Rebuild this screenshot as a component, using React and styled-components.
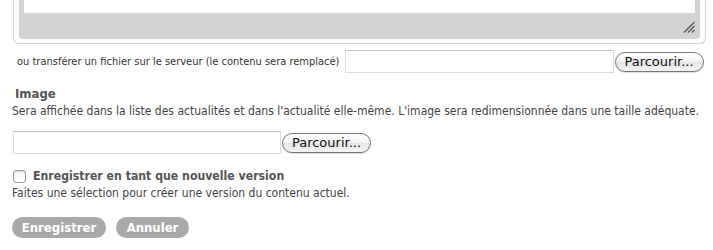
import React from 'react';
import styled, { createGlobalStyle } from 'styled-components';

const Global = createGlobalStyle`
  html, body { margin: 0; padding: 0; background: #fff; }
  body { font-family: "DejaVu Sans Condensed", "DejaVu Sans", sans-serif; color: #333; }
`;

const Page = styled.div`
  width: 713px;
  height: 250px;
  overflow: hidden;
  display: flex;
  flex-direction: column;
`;

const EditorFrame = styled.div`
  margin: 0 7px 0 13px;
  border: 1px solid #d4d4d4;
  border-top: none;
  border-radius: 0 0 6px 6px;
  padding: 0 5px 4px 5px;
`;

const EditorChrome = styled.div`
  background: #d3d3d3;
  border-radius: 0 0 4px 4px;
  padding: 0 5px 0 5px;
`;

const EditorArea = styled.div`
  background: #fff;
  height: 13px;
`;

const StatusBar = styled.div`
  height: 26px;
  display: flex;
  justify-content: flex-end;
  align-items: flex-end;
  padding-bottom: 6px;
  box-sizing: border-box;
`;

const UploadRow = styled.div`
  display: flex;
  align-items: center;
  margin-top: ${(p) => p.$top}px;
  padding-left: ${(p) => p.$indent || 0}px;
`;

const UploadLabel = styled.span`
  font-size: 11px;
  color: #333;
  margin-right: 5px;
`;

const FileInput = styled.div`
  width: ${(p) => p.$w}px;
  height: 23px;
  box-sizing: border-box;
  border: 1px solid #dcdcdc;
  border-top-color: #c4c4c4;
  background: #fff;
`;

const BrowseButton = styled.button`
  margin-left: 1px;
  width: 89px;
  height: 20px;
  padding: 0;
  border: 1px solid #777;
  border-radius: 10px;
  background: linear-gradient(#ffffff, #f2f2f2 50%, #e4e4e4 51%, #f4f4f4);
  font-family: "DejaVu Sans", sans-serif;
  font-size: 13px;
  color: #111;
  line-height: 18px;
  box-shadow: 0 1px 1px rgba(0, 0, 0, 0.15);
`;

const SectionTitle = styled.div`
  margin: 13px 0 0 15px;
  font-size: 13px;
  font-weight: bold;
  color: #555;
  line-height: 16px;
`;

const Help = styled.div`
  margin: ${(p) => p.$top || 0}px 0 0 12px;
  font-size: 12px;
  color: #444;
  line-height: 15px;
`;

const CheckRow = styled.label`
  display: flex;
  align-items: center;
  margin: 14px 0 0 13px;
  font-size: 12.2px;
  font-weight: bold;
  color: #555;
  line-height: 16px;
  gap: 7px;
`;

const CheckBox = styled.span`
  width: 11px;
  height: 11px;
  border: 1px solid #9a9a9a;
  border-radius: 3px;
  background: linear-gradient(#f4f4f4, #fff);
  box-shadow: inset 0 1px 1px rgba(0,0,0,0.12);
`;

const Actions = styled.div`
  display: flex;
  gap: 10px;
  margin: 16px 0 0 12px;
`;

const PillButton = styled.button`
  width: ${(p) => p.$w}px;
  height: 21px;
  padding: 0;
  border: none;
  border-radius: 11px;
  background: #a9a9a9;
  color: #fff;
  font-family: "DejaVu Sans Condensed", "DejaVu Sans", sans-serif;
  font-weight: bold;
  font-size: 13px;
  line-height: 21px;
`;

function Grip() {
  return (
    <svg width="12" height="12" viewBox="0 0 12 12">
      <g stroke="#555" strokeWidth="1.2">
        <line x1="1" y1="11.5" x2="11.5" y2="1" />
        <line x1="5" y1="11.5" x2="11.5" y2="5" />
        <line x1="9" y1="11.5" x2="11.5" y2="9" />
      </g>
    </svg>
  );
}

export default function App() {
  return (
    <Page>
      <Global />
      <EditorFrame>
        <EditorChrome>
          <EditorArea />
          <StatusBar>
            <Grip />
          </StatusBar>
        </EditorChrome>
      </EditorFrame>
      <UploadRow $indent={17} $top={6}>
        <UploadLabel>ou transférer un fichier sur le serveur (le contenu sera remplacé)</UploadLabel>
        <FileInput $w={269} />
        <BrowseButton>Parcourir...</BrowseButton>
      </UploadRow>
      <SectionTitle>Image</SectionTitle>
      <Help $top={2}>
        Sera affichée dans la liste des actualités et dans l'actualité elle-même. L'image sera redimensionnée dans une taille adéquate.
      </Help>
      <UploadRow $indent={13} $top={12}>
        <FileInput $w={268} />
        <BrowseButton>Parcourir...</BrowseButton>
      </UploadRow>
      <CheckRow>
        <CheckBox />
        Enregistrer en tant que nouvelle version
      </CheckRow>
      <Help $top={2}>Faites une sélection pour créer une version du contenu actuel.</Help>
      <Actions>
        <PillButton $w={94}>Enregistrer</PillButton>
        <PillButton $w={73}>Annuler</PillButton>
      </Actions>
    </Page>
  );
}
